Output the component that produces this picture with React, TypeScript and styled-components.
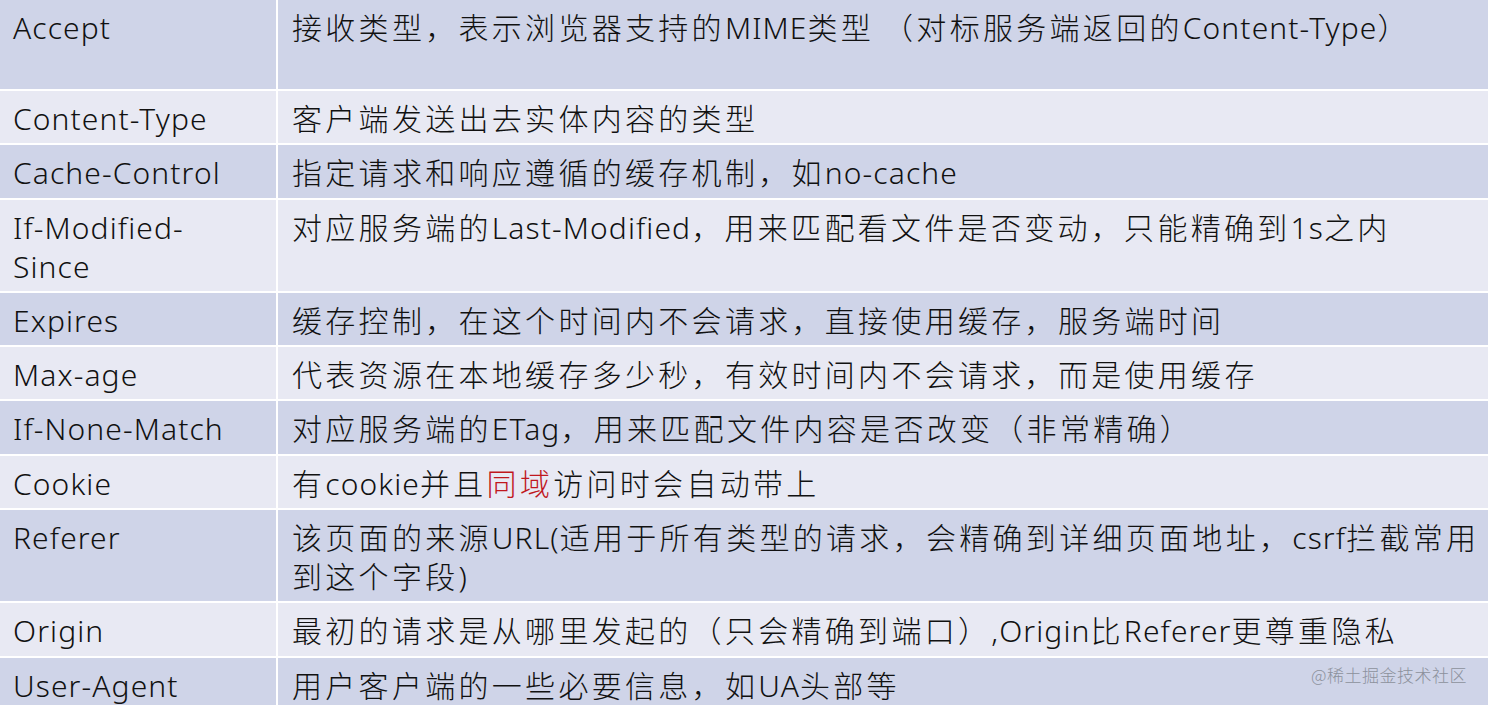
import React from 'react';
import styled, { createGlobalStyle } from 'styled-components';

const GlobalStyle = createGlobalStyle`
	body {
		margin: 0;
		background: #ffffff;
		overflow: hidden;
	}
`;

// Styles
const Page = styled.div`
	position: relative;
	width: 1488px;
	height: 705px;
	overflow: hidden;
	font-family: 'Noto Sans', 'Noto Sans CJK SC', sans-serif;
	font-weight: 300;
	color: #111111;
`;

const Table = styled.div`
	display: grid;
	grid-template-columns: 276px 1fr;
	gap: 2px;
	background: #ffffff;
`;

const Cell = styled.div<{ $dark: boolean; $tall?: boolean; $desc?: boolean }>`
	background: ${(p) => (p.$dark ? '#cfd4e8' : '#e8e9f3')};
	min-height: ${(p) => (p.$tall ? '89px' : 'auto')};
	box-sizing: border-box;
	padding: ${(p) => (p.$desc ? '8px 0 5.3px 14px' : '8px 0 5.3px 13px')};
	font-size: 30px;
	line-height: 39px;
	letter-spacing: 1.1px;
	white-space: nowrap;
`;

// CJK runs are set a little wider than the Latin ones
const Han = styled.span`
	letter-spacing: 3.3px;
`;

const Red = styled.span`
	color: #c0171d;
`;

const Watermark = styled.div`
	position: absolute;
	right: 21px;
	bottom: 18px;
	font-family: 'Noto Sans CJK SC', sans-serif;
	font-size: 17px;
	color: #8c919c;
	letter-spacing: 0.5px;
`;

const hanRun = /([\u3000-\u303f\u3400-\u9fff\uff00-\uffef]+)/;

function Txt({ children }: { children: string }) {
	return (
		<>
			{children.split(hanRun).map((part, i) =>
				i % 2 === 1 ? <Han key={i}>{part}</Han> : <React.Fragment key={i}>{part}</React.Fragment>
			)}
		</>
	);
}

interface Row {
	name: React.ReactNode;
	desc: React.ReactNode;
	tall?: boolean;
}

const rows: Row[] = [
	{
		name: 'Accept',
		desc: <Txt>接收类型，表示浏览器支持的MIME类型 （对标服务端返回的Content-Type）</Txt>,
		tall: true,
	},
	{ name: 'Content-Type', desc: <Txt>客户端发送出去实体内容的类型</Txt> },
	{ name: 'Cache-Control', desc: <Txt>指定请求和响应遵循的缓存机制，如no-cache</Txt> },
	{
		name: (
			<>
				If-Modified-
				<br />
				Since
			</>
		),
		desc: <Txt>对应服务端的Last-Modified，用来匹配看文件是否变动，只能精确到1s之内</Txt>,
	},
	{ name: 'Expires', desc: <Txt>缓存控制，在这个时间内不会请求，直接使用缓存，服务端时间</Txt> },
	{ name: 'Max-age', desc: <Txt>代表资源在本地缓存多少秒，有效时间内不会请求，而是使用缓存</Txt> },
	{ name: 'If-None-Match', desc: <Txt>对应服务端的ETag，用来匹配文件内容是否改变（非常精确）</Txt> },
	{
		name: 'Cookie',
		desc: (
			<>
				<Txt>有cookie并且</Txt>
				<Red>
					<Txt>同域</Txt>
				</Red>
				<Txt>访问时会自动带上</Txt>
			</>
		),
	},
	{
		name: 'Referer',
		desc: (
			<>
				<Txt>该页面的来源URL(适用于所有类型的请求，会精确到详细页面地址，csrf拦截常用</Txt>
				<br />
				<Txt>到这个字段)</Txt>
			</>
		),
	},
	{ name: 'Origin', desc: <Txt>最初的请求是从哪里发起的（只会精确到端口）,Origin比Referer更尊重隐私</Txt> },
	{ name: 'User-Agent', desc: <Txt>用户客户端的一些必要信息，如UA头部等</Txt> },
];

function App() {
	return (
		<Page>
			<GlobalStyle />
			<Table>
				{rows.map((row, i) => (
					<React.Fragment key={i}>
						<Cell $dark={i % 2 === 0} $tall={row.tall}>
							{row.name}
						</Cell>
						<Cell $dark={i % 2 === 0} $tall={row.tall} $desc>
							{row.desc}
						</Cell>
					</React.Fragment>
				))}
			</Table>
			<Watermark>@稀土掘金技术社区</Watermark>
		</Page>
	);
}

export default App;
